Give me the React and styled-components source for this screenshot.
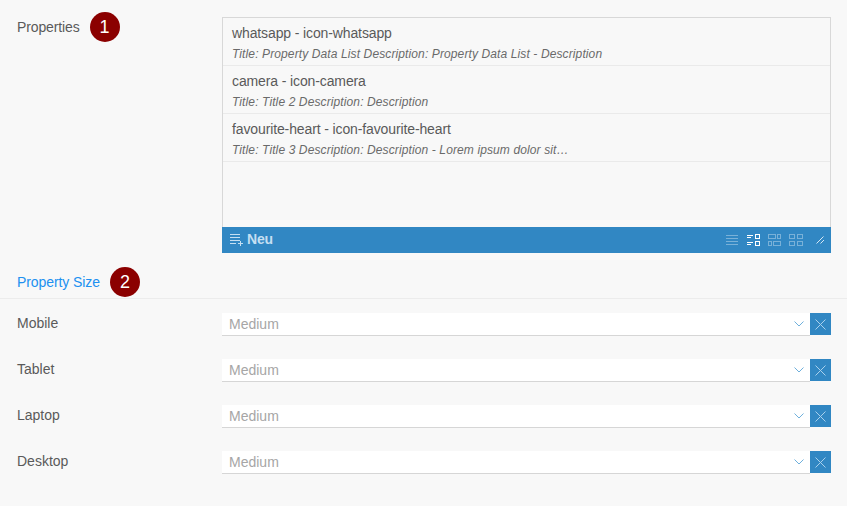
import React from 'react'
import styled, { createGlobalStyle } from 'styled-components'

const Global = createGlobalStyle`
  html, body {
    margin: 0;
    background: #f8f8f8;
    font-family: "Liberation Sans", Arial, sans-serif;
  }
`

const Page = styled.div`
  width: 847px;
  height: 506px;
  overflow: hidden;
  box-sizing: border-box;
  padding-top: 17px;
`

const Row = styled.div`
  display: grid;
  grid-template-columns: 205px 609px;
  padding-left: 17px;
`

const Label = styled.div`
  display: flex;
  align-items: center;
  height: 20px;
  font-size: 14px;
  letter-spacing: ${p => p.$tight ? '-0.12px' : '0'};
  color: #5a5a5a;
`

const Badge = styled.span`
  display: inline-flex;
  align-items: center;
  justify-content: center;
  width: 30px;
  height: 30px;
  margin: -5px 0 -5px 10px;
  border-radius: 50%;
  background: #8b0000;
  color: #fff;
  font-size: 18px;
  letter-spacing: 0;
`

const ListBox = styled.div`
  box-sizing: border-box;
  height: 236px;
  border: 1px solid #d8d8d8;
  border-bottom: 0;
  display: flex;
  flex-direction: column;
`

const Items = styled.div`
  flex: 1;
`

const Item = styled.div`
  box-sizing: border-box;
  height: 48px;
  padding: 7px 9px 0;
  border-bottom: 1px solid #eaeaea;
`

const ItemTitle = styled.div`
  font-size: 14px;
  line-height: 17px;
  letter-spacing: -0.12px;
  color: #5a5a5a;
`

const ItemMeta = styled.div`
  margin-top: 5px;
  font-size: 12px;
  line-height: 14px;
  font-style: italic;
  letter-spacing: 0.115px;
  color: #6a6a6a;
`

const Footer = styled.div`
  height: 26px;
  margin: 0 -1px;
  background: #3187c3;
  display: flex;
  align-items: center;
  padding-left: 8px;
  padding-right: 7px;
  color: #c4dff2;
`

const NewButton = styled.div`
  display: flex;
  align-items: center;
  gap: 4px;
  padding-bottom: 2px;
  font-size: 14px;
  font-weight: bold;
  letter-spacing: -0.2px;
  flex: 1;
`

const Tools = styled.div`
  display: flex;
  align-items: center;
  gap: 8px;
`

const ToolIcon = styled.svg`
  display: block;
  opacity: ${p => (p.$active ? 1 : 0.35)};
  margin-left: ${p => p.$gap || 0}px;
`

const SectionHead = styled.div`
  display: flex;
  align-items: center;
  height: 20px;
  margin-top: 19px;
  padding: 0 0 6px 17px;
  border-bottom: 1px solid #ececec;
  font-size: 14px;
  letter-spacing: -0.08px;
  color: #2090f0;
`

const Fields = styled.div`
  margin-top: 14px;
  display: flex;
  flex-direction: column;
  gap: 23px;
`

const Control = styled.div`
  display: flex;
  height: 23px;
`

const Select = styled.div`
  flex: 1;
  box-sizing: border-box;
  height: 23px;
  display: flex;
  align-items: center;
  justify-content: space-between;
  padding: 0 6px 0 7px;
  background: #fff;
  border-bottom: 1px solid #d6d6d6;
  font-size: 14px;
  color: #a6a6a6;
`

const Clear = styled.button`
  width: 21px;
  height: 22px;
  padding: 0;
  border: 0;
  background: #3187c3;
  display: flex;
  align-items: center;
  justify-content: center;
`

const NewIcon = () => (
  <svg width="13" height="13" viewBox="0 0 13 13" fill="none" stroke="#c4dff2" strokeWidth="1">
    <path d="M0 1.5h10M0 4.5h10M0 7.5h10M0 10.5h6M8 10.5h5M10.5 8v5" />
  </svg>
)

const ListIcon = () => (
  <ToolIcon width="13" height="12" viewBox="0 0 13 12" fill="none" stroke="#fff">
    <path d="M0 1.5h12M0 4.5h12M0 7.5h12M0 10.5h12" />
  </ToolIcon>
)

const DetailIcon = () => (
  <ToolIcon $active width="13" height="12" viewBox="0 0 13 12" fill="none" stroke="#fff">
    <path d="M0 1.5h6M0 3.5h4M0 8.5h6M0 10.5h4" />
    <rect x="8.5" y="0.5" width="4" height="4" />
    <rect x="8.5" y="7.5" width="4" height="4" />
  </ToolIcon>
)

const MixedIcon = () => (
  <ToolIcon width="13" height="12" viewBox="0 0 13 12" fill="none" stroke="#fff">
    <rect x="0.5" y="0.5" width="7" height="4" />
    <rect x="9.5" y="0.5" width="3" height="4" />
    <rect x="0.5" y="7.5" width="3" height="4" />
    <rect x="5.5" y="7.5" width="7" height="4" />
  </ToolIcon>
)

const GridIcon = () => (
  <ToolIcon width="14" height="12" viewBox="0 0 14 12" fill="none" stroke="#fff">
    <rect x="0.5" y="0.5" width="5" height="4" />
    <rect x="8.5" y="0.5" width="5" height="4" />
    <rect x="0.5" y="7.5" width="5" height="4" />
    <rect x="8.5" y="7.5" width="5" height="4" />
  </ToolIcon>
)

const ResizeIcon = () => (
  <ToolIcon $active $gap={5} width="8" height="8" viewBox="0 0 8 8" fill="none" stroke="#fff" strokeWidth="0.8">
    <path d="M0.5 7.5L7.5 0.5M4.5 7.5L8 4" />
  </ToolIcon>
)

const Chevron = () => (
  <svg width="10" height="6" viewBox="0 0 10 6" fill="none" stroke="#6fb0dc">
    <path d="M0.5 0.5L5 5L9.5 0.5" />
  </svg>
)

const Cross = () => (
  <svg width="11" height="11" viewBox="0 0 11 11" fill="none" stroke="#a9d0ec">
    <path d="M0.5 0.5L10.5 10.5M10.5 0.5L0.5 10.5" />
  </svg>
)

const items = [
  ['whatsapp - icon-whatsapp', 'Title: Property Data List Description: Property Data List - Description'],
  ['camera - icon-camera', 'Title: Title 2 Description: Description'],
  ['favourite-heart - icon-favourite-heart', 'Title: Title 3 Description: Description - Lorem ipsum dolor sit…'],
]

const sizes = ['Mobile', 'Tablet', 'Laptop', 'Desktop']

export default function App() {
  return (
    <Page>
      <Global />
      <Row>
        <Label $tight>
          Properties
          <Badge>1</Badge>
        </Label>
        <ListBox>
          <Items>
            {items.map(([title, meta]) => (
              <Item key={title}>
                <ItemTitle>{title}</ItemTitle>
                <ItemMeta>{meta}</ItemMeta>
              </Item>
            ))}
          </Items>
          <Footer>
            <NewButton>
              <NewIcon />
              Neu
            </NewButton>
            <Tools>
              <ListIcon />
              <DetailIcon />
              <MixedIcon />
              <GridIcon />
              <ResizeIcon />
            </Tools>
          </Footer>
        </ListBox>
      </Row>
      <SectionHead>
        Property Size
        <Badge>2</Badge>
      </SectionHead>
      <Fields>
        {sizes.map(size => (
          <Row key={size}>
            <Label>{size}</Label>
            <Control>
              <Select>
                Medium
                <Chevron />
              </Select>
              <Clear aria-label="Clear">
                <Cross />
              </Clear>
            </Control>
          </Row>
        ))}
      </Fields>
    </Page>
  )
}
